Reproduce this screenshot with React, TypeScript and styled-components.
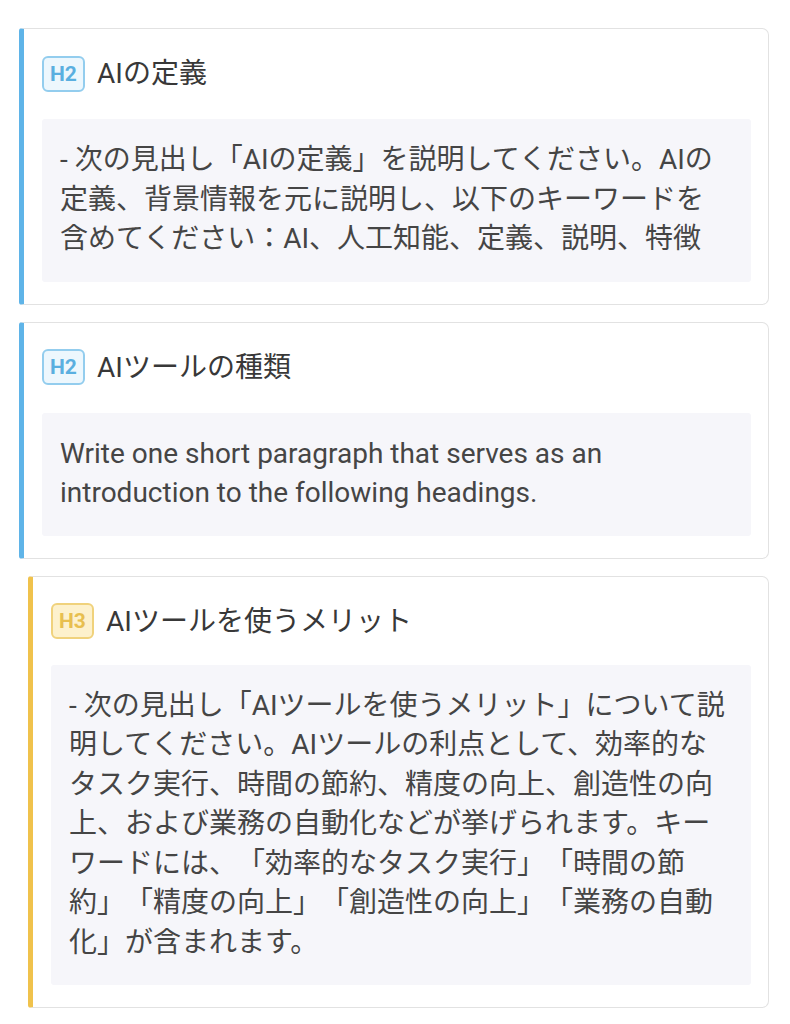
import { createGlobalStyle } from "styled-components";
import styled from "styled-components";

const GlobalStyle = createGlobalStyle`
    body {
        margin: 0;
        background: #ffffff;
        font-family: Roboto, "Noto Sans CJK JP", sans-serif;
    }
`;

const accents = {
    H2: { bar: "#5fb4e8", border: "#93cdee", bg: "#edf7fd", text: "#5aafe0" },
    H3: { bar: "#f0c24c", border: "#f0d27c", bg: "#fdf1cc", text: "#e8bf4f" },
};

type Level = keyof typeof accents;

const Page = styled.div`
    display: flex;
    flex-direction: column;
    gap: 17px;
    padding: 28px 21px 14px 19px;
`;

const Card = styled.section<{ $level: Level }>`
    margin-left: ${(p) => (p.$level === "H3" ? "9px" : "0")};
    background: #ffffff;
    border: 1px solid #e2e2e2;
    border-left: 5px solid ${(p) => accents[p.$level].bar};
    border-radius: 3px 7px 7px 3px;
    padding: 25px 17px 22px 18px;
    display: flex;
    flex-direction: column;
    gap: ${(p) => (p.$level === "H3" ? "24px" : "26px")};
`;

const Header = styled.div`
    display: flex;
    align-items: center;
    gap: 12px;
    height: 39px;
`;

const Badge = styled.span<{ $level: Level }>`
    display: inline-flex;
    align-items: center;
    justify-content: center;
    box-sizing: border-box;
    width: 43px;
    height: 36px;
    border: 2px solid ${(p) => accents[p.$level].border};
    background: ${(p) => accents[p.$level].bg};
    color: ${(p) => accents[p.$level].text};
    border-radius: 6px;
    font-size: 21px;
    font-weight: 700;
`;

const Title = styled.h2`
    margin: 0;
    font-size: 28px;
    font-weight: 400;
    color: #383838;
    line-height: 39px;
`;

const Prompt = styled.div`
    background: #f6f6fa;
    border-radius: 3px;
    padding: 21px 18px 23px;
    font-size: 28px;
    line-height: 39.5px;
    color: #454545;
    text-spacing-trim: space-all;
`;

const Line = styled.span`
    display: block;
    white-space: nowrap;
`;

const items: { level: Level; title: string; lines: string[] }[] = [
    {
        level: "H2",
        title: "AIの定義",
        lines: [
            "- 次の見出し「AIの定義」を説明してください。AIの",
            "定義、背景情報を元に説明し、以下のキーワードを",
            "含めてください：AI、人工知能、定義、説明、特徴",
        ],
    },
    {
        level: "H2",
        title: "AIツールの種類",
        lines: [
            "Write one short paragraph that serves as an",
            "introduction to the following headings.",
        ],
    },
    {
        level: "H3",
        title: "AIツールを使うメリット",
        lines: [
            "- 次の見出し「AIツールを使うメリット」について説",
            "明してください。AIツールの利点として、効率的な",
            "タスク実行、時間の節約、精度の向上、創造性の向",
            "上、および業務の自動化などが挙げられます。キー",
            "ワードには、「効率的なタスク実行」「時間の節",
            "約」「精度の向上」「創造性の向上」「業務の自動",
            "化」が含まれます。",
        ],
    },
];

const App = () => {
    return (
        <>
            <GlobalStyle />
            <Page>
                {items.map((item) => (
                    <Card key={item.title} $level={item.level}>
                        <Header>
                            <Badge $level={item.level}>{item.level}</Badge>
                            <Title>{item.title}</Title>
                        </Header>
                        <Prompt>
                            {item.lines.map((line) => (
                                <Line key={line}>{line}</Line>
                            ))}
                        </Prompt>
                    </Card>
                ))}
            </Page>
        </>
    );
};

export default App;
